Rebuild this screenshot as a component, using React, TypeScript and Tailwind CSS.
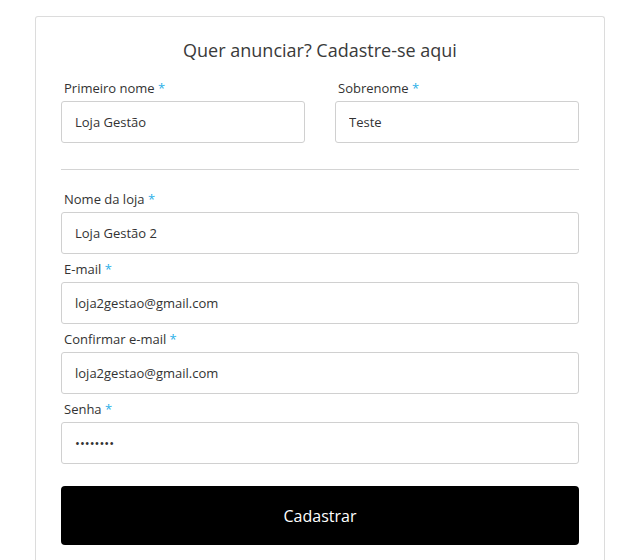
import React from 'react';

const Field: React.FC<{ label: string; value: string; type?: string }> = ({ label, value, type = 'text' }) => (
  <div className="flex flex-col">
    <label className="h-5 text-[13px] leading-5 text-[#333] pl-[3px] mb-[3px]">
      {label} <span className="text-[#2bb0e8]">*</span>
    </label>
    <input
      type={type}
      defaultValue={value}
      readOnly
      className="h-[42px] w-full rounded-[3px] border border-[#d0d0d0] bg-white px-[13px] text-[13px] text-[#333] outline-none"
    />
  </div>
);

const App: React.FC = () => {
  return (
    <div className="min-h-[560px] bg-white font-['Open_Sans',sans-serif] pt-4 pl-[35px]">
      <div className="w-[570px] h-[560px] border border-[#dcdcdc] rounded-t-[3px] border-b-0 px-[25px] pt-[21px]">
        <h2 className="text-center text-[18px] leading-6 text-[#3a3a3a]">Quer anunciar? Cadastre-se aqui</h2>
        <div className="mt-[16px] grid grid-cols-2 gap-[30px]">
          <Field label="Primeiro nome" value="Loja Gestão" />
          <Field label="Sobrenome" value="Teste" />
        </div>
        <hr className="mt-[26px] mb-[19px] border-t border-[#d4d4d4]" />
        <div className="flex flex-col gap-[5px]">
          <Field label="Nome da loja" value="Loja Gestão 2" />
          <Field label="E-mail" value="loja2gestao@gmail.com" />
          <Field label="Confirmar e-mail" value="loja2gestao@gmail.com" />
          <Field label="Senha" value="asdfghjk" type="password" />
        </div>
        <button className="mt-[22px] h-[59px] w-full rounded-[4px] bg-black text-[16px] text-white">
          Cadastrar
        </button>
      </div>
    </div>
  );
};

export default App;
